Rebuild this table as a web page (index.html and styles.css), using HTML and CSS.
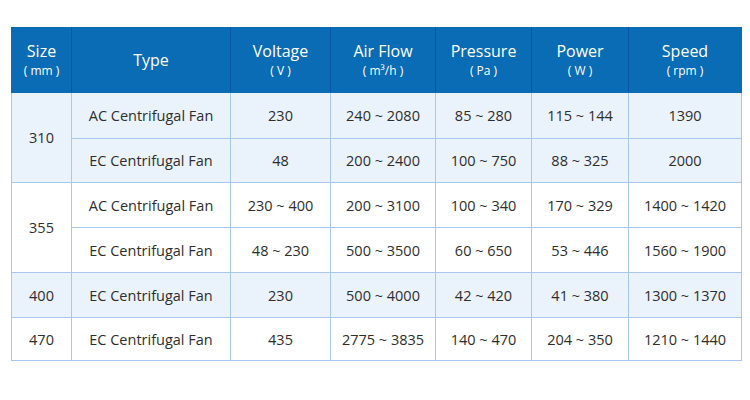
FILE: index.html
```html
<!DOCTYPE html>
<html>
<head>
<meta charset="utf-8">
<link rel="stylesheet" href="styles.css">
</head>
<body>
<table class="spec">
  <colgroup>
    <col class="c-size"><col class="c-type"><col class="c-volt"><col class="c-air"><col class="c-pres"><col class="c-pow"><col class="c-speed">
  </colgroup>
  <thead>
    <tr>
      <th>Size<span class="unit">( mm )</span></th>
      <th>Type</th>
      <th>Voltage<span class="unit">( V )</span></th>
      <th>Air Flow<span class="unit">( m³/h )</span></th>
      <th>Pressure<span class="unit">( Pa )</span></th>
      <th>Power<span class="unit">( W )</span></th>
      <th>Speed<span class="unit">( rpm )</span></th>
    </tr>
  </thead>
  <tbody class="alt">
    <tr class="first"><td rowspan="2">310</td><td>AC Centrifugal Fan</td><td>230</td><td>240 ~ 2080</td><td>85 ~ 280</td><td>115 ~ 144</td><td>1390</td></tr>
    <tr class="short"><td>EC Centrifugal Fan</td><td>48</td><td>200 ~ 2400</td><td>100 ~ 750</td><td>88 ~ 325</td><td>2000</td></tr>
  </tbody>
  <tbody>
    <tr><td rowspan="2">355</td><td>AC Centrifugal Fan</td><td>230 ~ 400</td><td>200 ~ 3100</td><td>100 ~ 340</td><td>170 ~ 329</td><td>1400 ~ 1420</td></tr>
    <tr><td>EC Centrifugal Fan</td><td>48 ~ 230</td><td>500 ~ 3500</td><td>60 ~ 650</td><td>53 ~ 446</td><td>1560 ~ 1900</td></tr>
  </tbody>
  <tbody class="alt">
    <tr><td>400</td><td>EC Centrifugal Fan</td><td>230</td><td>500 ~ 4000</td><td>42 ~ 420</td><td>41 ~ 380</td><td>1300 ~ 1370</td></tr>
  </tbody>
  <tbody>
    <tr class="last"><td>470</td><td>EC Centrifugal Fan</td><td>435</td><td>2775 ~ 3835</td><td>140 ~ 470</td><td>204 ~ 350</td><td>1210 ~ 1440</td></tr>
  </tbody>
</table>
</body>
</html>
```
FILE: styles.css
```css
html, body { background: #ffffff; }
body {
  margin: 27px 0 0 11px;
  font-family: "Open Sans", "Liberation Sans", sans-serif;
  color: #2e2e2e;
}
.spec {
  border-collapse: collapse;
  table-layout: fixed;
  width: 730px;
}
.c-size { width: 60px; }
.c-type { width: 159px; }
.c-volt { width: 100px; }
.c-air { width: 105px; }
.c-pres { width: 96px; }
.c-pow { width: 97px; }
.c-speed { width: 113px; }
.spec th {
  background: #0a6cb4;
  color: #ffffff;
  font-weight: 400;
  font-size: 16px;
  line-height: 20px;
  height: 64px;
  padding: 0;
  text-align: center;
  vertical-align: middle;
  border: 1px solid #0a6cb4;
  border-left: 1px solid #0b55a6;
  border-right: 1px solid #0b55a6;
}
.spec th:first-child { border-left-color: #0a6cb4; }
.spec th:last-child { border-right-color: #0a6cb4; }
.spec th .unit {
  display: block;
  font-size: 12px;
  line-height: 16px;
  margin-top: 2px;
}
.spec td {
  font-size: 14.5px;
  text-align: center;
  vertical-align: middle;
  padding: 0;
  border: 1px solid #a9c7ee;
  height: 44px;
}
.spec tr.first td { height: 45px; }
.spec tr.short td { height: 43px; }
.spec tr.last td { height: 42px; }
.spec tbody.alt td { background: #eaf2fc; }
```
